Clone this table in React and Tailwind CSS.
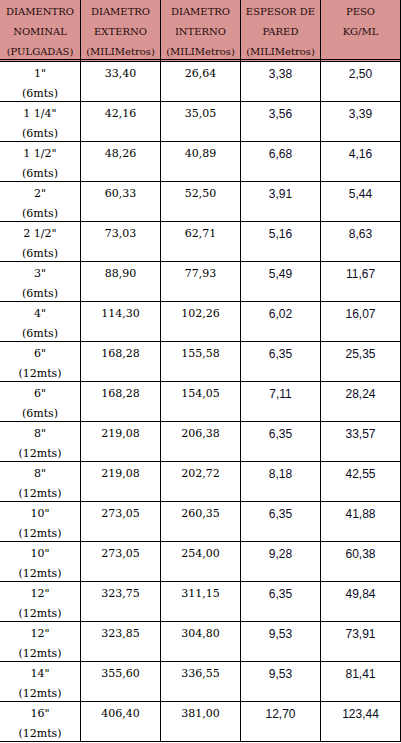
import React from "react";

const rows = [
  ['1"', "(6mts)", "33,40", "26,64", "3,38", "2,50"],
  ['1 1/4"', "(6mts)", "42,16", "35,05", "3,56", "3,39"],
  ['1 1/2"', "(6mts)", "48,26", "40,89", "6,68", "4,16"],
  ['2"', "(6mts)", "60,33", "52,50", "3,91", "5,44"],
  ['2 1/2"', "(6mts)", "73,03", "62,71", "5,16", "8,63"],
  ['3"', "(6mts)", "88,90", "77,93", "5,49", "11,67"],
  ['4"', "(6mts)", "114,30", "102,26", "6,02", "16,07"],
  ['6"', "(12mts)", "168,28", "155,58", "6,35", "25,35"],
  ['6"', "(6mts)", "168,28", "154,05", "7,11", "28,24"],
  ['8"', "(12mts)", "219,08", "206,38", "6,35", "33,57"],
  ['8"', "(12mts)", "219,08", "202,72", "8,18", "42,55"],
  ['10"', "(12mts)", "273,05", "260,35", "6,35", "41,88"],
  ['10"', "(12mts)", "273,05", "254,00", "9,28", "60,38"],
  ['12"', "(12mts)", "323,75", "311,15", "6,35", "49,84"],
  ['12"', "(12mts)", "323,85", "304,80", "9,53", "73,91"],
  ['14"', "(12mts)", "355,60", "336,55", "9,53", "81,41"],
  ['16"', "(12mts)", "406,40", "381,00", "12,70", "123,44"],
];

const headers = [
  ["DIAMENTRO", "NOMINAL", "(PULGADAS)"],
  ["DIAMETRO", "EXTERNO", "(MILIMetros)"],
  ["DIAMETRO", "INTERNO", "(MILIMetros)"],
  ["ESPESOR DE", "PARED", "(MILIMetros)"],
  ["PESO", "KG/ML"],
];

const serif = "font-['DejaVu_Serif',serif]";

export default function App() {
  return (
    <div className="w-[401px] h-[743px] bg-white overflow-hidden">
      <div className="grid grid-cols-[81px_80px_80px_80px_80px]">
        {headers.map((h, i) => (
          <div
            key={i}
            className={`h-[62px] box-border bg-[#d99594] border-r border-black border-b-[3px] border-b-black border-double pt-[2px] text-center text-[#240a0a] text-[10px] leading-[20px] ${serif}`}
            style={{ borderRightStyle: "solid" }}
          >
            <div className="whitespace-nowrap">{h[0]}</div>
            <div className="whitespace-nowrap">{h[1]}</div>
            {h[2] && <div className="whitespace-nowrap">{h[2]}</div>}
          </div>
        ))}
        {rows.map((r, ri) => (
          <React.Fragment key={ri}>
            <div className={`h-[40px] box-border border-r border-b border-black pt-[2px] text-center text-[11px] leading-[20px] text-black ${serif}`}>
              <div>{r[0]}</div>
              <div>{r[1]}</div>
            </div>
            <div className={`h-[40px] box-border border-r border-b border-black pt-[2px] text-center text-[11px] leading-[20px] text-black ${serif}`}>
              {r[2]}
            </div>
            <div className={`h-[40px] box-border border-r border-b border-black pt-[2px] text-center text-[11px] leading-[20px] text-black ${serif}`}>
              {r[3]}
            </div>
            <div className="h-[40px] box-border border-r border-b border-black pt-[2px] text-center text-[12px] leading-[20px] text-[#0a0a1e] font-['Liberation_Sans',sans-serif]">
              {r[4]}
            </div>
            <div className="h-[40px] box-border border-r border-b border-black pt-[2px] text-center text-[12px] leading-[20px] text-[#0a0a1e] font-['Liberation_Sans',sans-serif]">
              {r[5]}
            </div>
          </React.Fragment>
        ))}
      </div>
    </div>
  );
}
